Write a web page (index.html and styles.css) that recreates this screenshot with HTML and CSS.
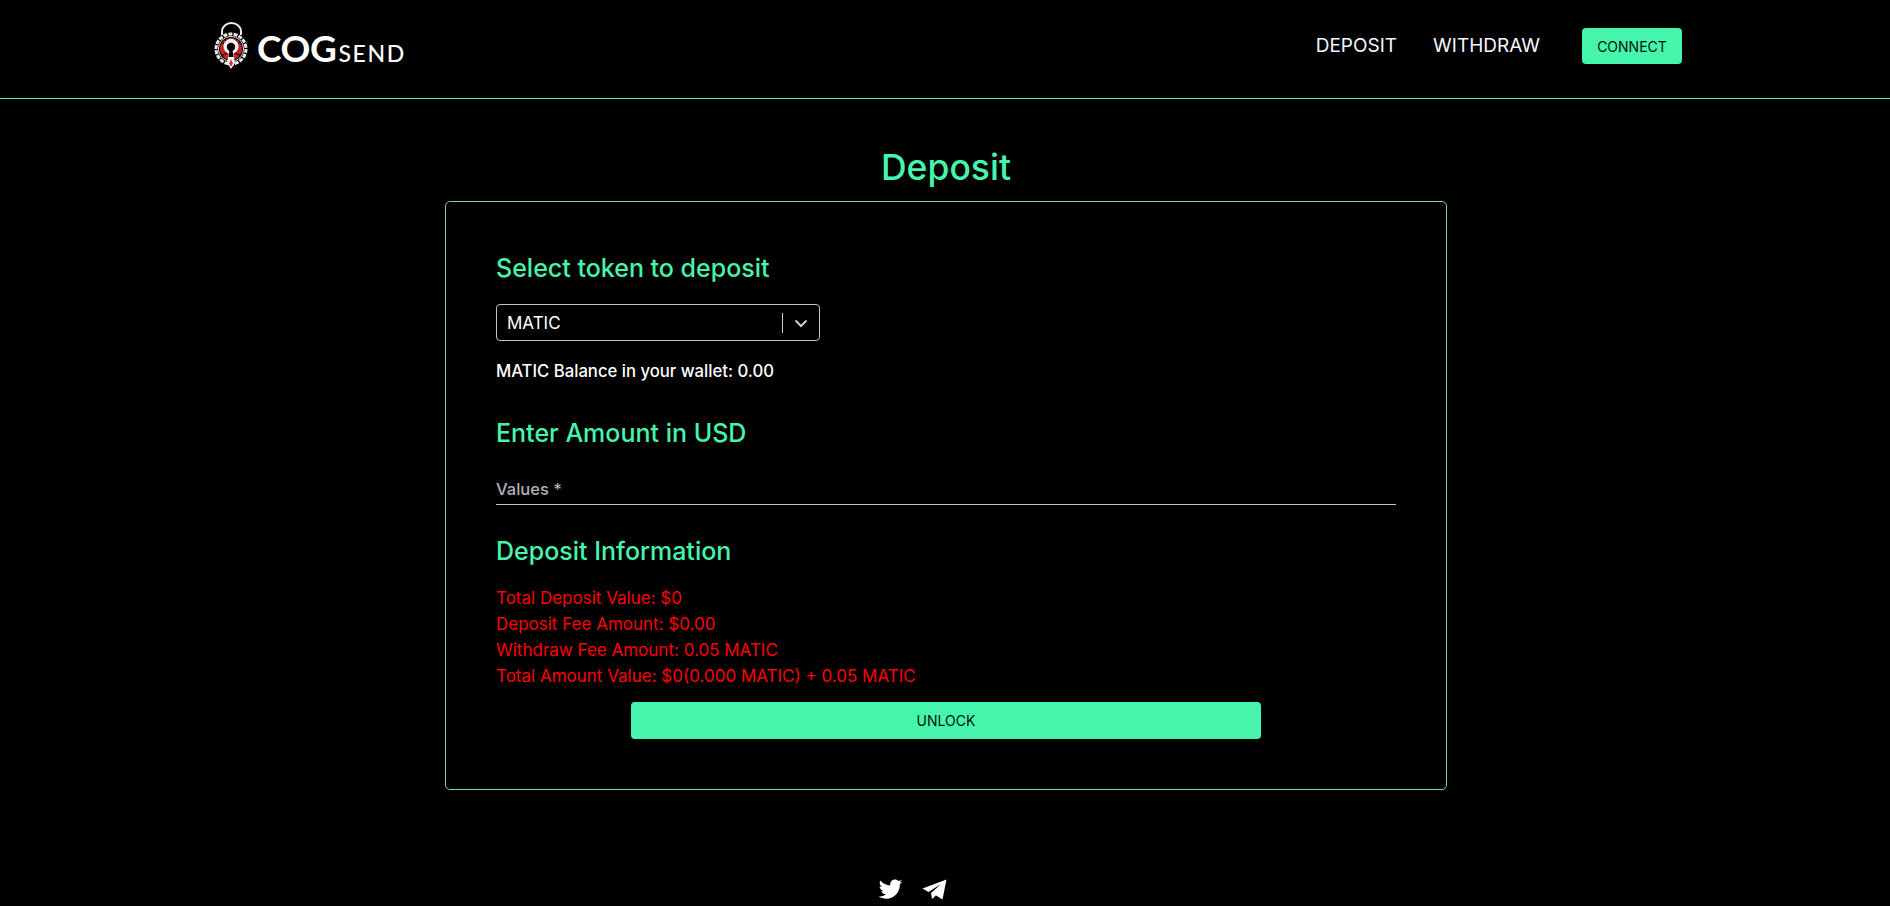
FILE: index.html
```html
<!DOCTYPE html>
<html lang="en">
<head>
<meta charset="utf-8">
<title>COGsend Deposit</title>
<link rel="stylesheet" href="styles.css">
</head>
<body>
<header class="topbar">
  <div class="brand">
    <svg class="brand-icon" viewBox="0 0 34 48" aria-hidden="true">
      <path d="M8 13V9.500a9.500 8.500 0 0 1 19 0V13" fill="none" stroke="#eee" stroke-width="2"/>
      <circle cx="17" cy="27" r="15" fill="none" stroke="#e8e8e8" stroke-width="3" stroke-dasharray="4 1.200"/>
      <circle cx="17" cy="27" r="12.600" fill="#000" stroke="#ddd" stroke-width="1"/>
      <circle cx="17" cy="27" r="11" fill="#c3251f"/>
      <path d="M7 20l6 3M27 20l-6 3M7 34l6-3M27 34l-6-3M11 17l3 5M23 17l-3 5" stroke="#111" stroke-width="1.300"/>
      <path d="M17 47l-4-6 1.800-9.500a7.500 7.500 0 1 1 4.400 0L21 41z" fill="#f4f4f4"/>
      <circle cx="17" cy="25" r="4.200" fill="#000"/>
      <path d="M15.600 27h2.800l1 8h-4.800z" fill="#000"/>
      <path d="M17 37l1.800 4.500L17 45l-1.800-3.500z" fill="#d8361f"/>
    </svg>
    <span class="brand-name">COG<span class="brand-small">SEND</span></span>
  </div>
  <nav class="nav">
    <a class="nav-link nav-deposit">DEPOSIT</a>
    <a class="nav-link nav-withdraw">WITHDRAW</a>
    <button class="connect">CONNECT</button>
  </nav>
</header>
<main class="page">
  <h1 class="title">Deposit</h1>
  <section class="card">
    <h2 class="heading">Select token to deposit</h2>
    <div class="select">
      <span class="select-value">MATIC</span>
      <span class="select-sep"></span>
      <svg class="chevron" viewBox="0 0 20 20" aria-hidden="true"><path d="M4.500 7.500 10 13l5.500-5.500" fill="none" stroke="#ccc" stroke-width="2"/></svg>
    </div>
    <p class="balance">MATIC Balance in your wallet: 0.00</p>
    <h2 class="heading heading-amount">Enter Amount in USD</h2>
    <div class="field"><span class="field-label">Values *</span></div>
    <h2 class="heading heading-info">Deposit Information</h2>
    <ul class="info">
      <li>Total Deposit Value: $0</li>
      <li>Deposit Fee Amount: $0.00</li>
      <li>Withdraw Fee Amount: 0.05 MATIC</li>
      <li>Total Amount Value: $0(0.000 MATIC) + 0.05 MATIC</li>
    </ul>
    <button class="unlock">UNLOCK</button>
  </section>
</main>
<footer class="social">
  <svg class="social-icon" viewBox="0 0 24 24" aria-hidden="true"><path d="M22.46 6c-.77.35-1.6.58-2.46.69.88-.53 1.56-1.37 1.88-2.38-.83.5-1.75.85-2.72 1.05C18.37 4.500 17.26 4 16 4c-2.35 0-4.27 1.92-4.27 4.29 0 .34.04.67.11.98C8.280 9.090 5.110 7.380 3 4.790c-.37.63-.58 1.370-.58 2.150 0 1.490.75 2.810 1.910 3.560-.71 0-1.370-.2-1.980-.5v.03c0 2.080 1.480 3.820 3.440 4.210a4.220 4.220 0 0 1-1.930.07 4.280 4.280 0 0 0 4 2.980 8.521 8.521 0 0 1-5.330 1.840c-.34 0-.68-.02-1.020-.06C3.440 20.290 5.700 21 8.120 21 16 21 20.330 14.460 20.330 8.790c0-.19 0-.37-.01-.56.84-.6 1.560-1.360 2.140-2.230z" fill="#fff"/></svg>
  <svg class="social-icon" viewBox="-1.500 -1.500 27 27" aria-hidden="true"><path d="M0 12 24 3 20 23 13.500 19 9.500 22.500 8.500 16.500 18.500 7.500 6 15.500z" fill="#fff"/></svg>
</footer>
</body>
</html>
```

FILE: styles.css
```css
* { box-sizing: border-box; }
html, body { margin: 0; padding: 0; }
body {
  background: #000;
  color: #fff;
  font-family: Inter, "Open Sans", sans-serif;
}
.topbar {
  height: 99px;
  border-bottom: 1px solid #45f5ab;
  display: flex;
  align-items: center;
  justify-content: space-between;
  padding: 0 208px 0 214px;
}
.brand { display: flex; align-items: center; gap: 9px; margin-top: -6px; }
.brand-icon { width: 34px; height: 48px; }
.brand-name { font-family: Lato, sans-serif; font-size: 37px; font-weight: 700; line-height: 1; letter-spacing: -0.4px; margin-top: 2px; }
.brand-small { font-size: 23px; font-weight: 500; letter-spacing: 1.6px; margin-left: 2px; }
.nav { display: flex; align-items: center; margin-top: -6px; }
.nav-link { font-size: 19px; font-weight: 400; color: #f2f6ff; margin-top: -2px; }
.nav-deposit { margin-right: 36px; }
.nav-withdraw { margin-right: 42px; }
.connect {
  width: 100px;
  height: 36px;
  border: 0;
  border-radius: 4px;
  background: #45f5ab;
  color: #02130c;
  font-family: inherit;
  font-size: 14px;
  font-weight: 400;
  padding: 0;
}
.page { display: flex; flex-direction: column; align-items: center; padding-left: 2px; }
.title {
  margin: 47px 0 0;
  height: 55px;
  line-height: 44px;
  font-size: 35.500px;
  font-weight: 500;
  color: #45f5ab;
}
.card {
  width: 1002px;
  height: 589px;
  border: 1px solid #6fdc9f;
  border-radius: 5px;
  padding: 50px;
  display: flex;
  flex-direction: column;
}
.heading {
  margin: 0;
  height: 32px;
  line-height: 32px;
  font-size: 25px;
  font-weight: 500;
  color: #45f5ab;
}
.select {
  margin-top: 20px;
  width: 324px;
  height: 38px;
  border: 1px solid #c4c4c4;
  border-radius: 4px;
  display: flex;
  align-items: center;
  padding: 0 8px 0 10px;
}
.select-value { flex: 1; font-size: 17px; font-weight: 400; }
.select-sep { width: 1px; height: 20px; background: #ccc; margin-right: 8px; }
.chevron { width: 20px; height: 20px; }
.balance { margin: 18px 0 0; font-size: 16.700px; line-height: 24px; font-weight: 500; }
.heading-amount { margin-top: 34px; }
.field { margin-top: 26px; height: 30px; border-bottom: 1px solid #c4c4c4; display: flex; align-items: flex-end; padding-bottom: 5px; }
.field-label { font-size: 16.500px; font-weight: 500; color: #b0b0b8; }
.heading-info { margin-top: 30px; }
.info { list-style: none; margin: 18px 0 0; padding: 0; }
.info li { height: 26px; line-height: 26px; font-size: 17px; color: #f00; }
.unlock {
  align-self: center;
  margin-top: 13px;
  width: 630px;
  height: 37px;
  flex: none;
  border: 0;
  border-radius: 4px;
  background: #45f5ab;
  color: #02130c;
  font-family: inherit;
  font-size: 14px;
  padding: 0;
}
.social { display: flex; justify-content: center; gap: 17px; padding: 85px 66px 4px 0; }
.social-icon { width: 27px; height: 27px; }
```
